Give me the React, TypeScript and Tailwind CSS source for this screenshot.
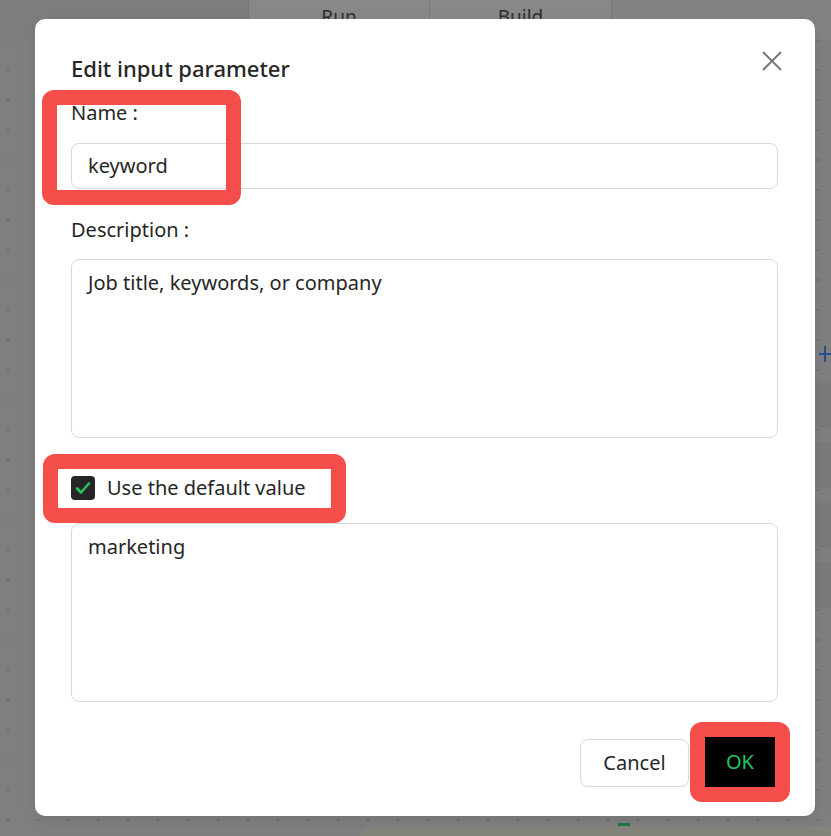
import React from "react";

const font = { fontFamily: '"Noto Sans", "Open Sans", sans-serif' };

function Annotation({ className }: { className: string }) {
  return <div className={`pointer-events-none absolute rounded-[12px] border-[15px] border-[#f44d4a] ${className}`} />;
}

function Field({ label, value, tall }: { label: string; value: string; tall?: boolean }) {
  return (
    <div className="flex flex-col">
      <div className="h-6 text-[20px] leading-6 text-[#262626]">{label}</div>
      <div
        className={`rounded-[8px] border border-[#d9d9d9] bg-white px-4 text-[20px] text-[#262626] ${
          tall ? "mt-[17px] h-[179px] pt-[8px]" : "mt-[18px] flex h-[46px] items-center"
        }`}
      >
        {value}
      </div>
    </div>
  );
}

export default function App() {
  return (
    <div className="relative h-[836px] w-[831px] overflow-hidden bg-[#7f7f7f]" style={font}>
      {/* canvas behind the mask */}
      <div className="absolute inset-0 bg-[radial-gradient(circle,#6c6c6c_1px,transparent_1.2px)] bg-[length:30px_30px] bg-[position:-7px_-5px]" />
      <div className="absolute left-0 top-0 flex h-[40px] w-full text-[19px] text-[#2e2e2e]">
        <div className="w-[248px] bg-[#7d7d7d]" />
        <div className="flex w-[182px] justify-center border-x border-[#777] bg-[#888] pt-[3px]">Run</div>
        <div className="flex w-[182px] justify-center border-r border-[#777] bg-[#888] pt-[3px]">Build</div>
        <div className="flex-1 bg-[#838383]" />
      </div>
      <svg width="14" height="18" viewBox="0 0 14 18" className="absolute left-[818px] top-[345px]">
        <path d="M7 1V17M1 9H13" stroke="#2a4f8f" strokeWidth="2" />
      </svg>
      <div className="absolute right-0 top-[382px] flex w-[16px] flex-col gap-[14px]">
        <div className="h-[46px] bg-[#7a7a7a]" />
        <div className="h-[46px] bg-[#7a7a7a]" />
        <div className="h-[46px] bg-[#7a7a7a]" />
        <div className="h-[46px] bg-[#7a7a7a]" />
      </div>
      <div className="absolute left-[360px] top-[826px] h-[20px] w-[480px] rounded-tl-[8px] bg-[#85847c]" />
      <div className="absolute left-[618px] top-[823px] h-[3px] w-[12px] bg-[#1f7a45]" />

      {/* modal */}
      <div className="absolute left-[35px] top-[19px] flex h-[797px] w-[780px] flex-col rounded-[10px] bg-white pl-[36px] pr-[37px] pt-[36px] shadow-[0_6px_16px_rgba(0,0,0,0.08)]">
        <div className="flex h-[26px] items-center justify-between">
          <div className="text-[22px] font-medium text-[#262626]">Edit input parameter</div>
          <svg width="22" height="22" viewBox="0 0 22 22" className="mr-[-5px] mt-[-14px]">
            <path d="M2 2L20 20M20 2L2 20" stroke="#7a7a7a" strokeWidth="2" />
          </svg>
        </div>

        <div className="mt-[20px]">
          <Field label="Name :" value="keyword" />
        </div>
        <div className="mt-[29px]">
          <Field label="Description :" value="Job title, keywords, or company" tall />
        </div>

        <div className="mt-[38px] flex h-6 items-center gap-3">
          <div className="flex h-[24px] w-[24px] items-center justify-center rounded-[4px] bg-[#262626]">
            <svg width="18" height="18" viewBox="0 0 18 18">
              <path d="M3 9.5L7 13.5L15 4.5" fill="none" stroke="#22c55e" strokeWidth="2.6" strokeLinecap="round" strokeLinejoin="round" />
            </svg>
          </div>
          <span className="text-[20px] text-[#262626]">Use the default value</span>
        </div>

        <div className="mt-[23px] h-[179px] rounded-[8px] border border-[#d9d9d9] px-4 pt-[8px] text-[20px] text-[#262626]">
          marketing
        </div>

        <div className="mt-[35px] flex items-end justify-end gap-4 pr-[3px]">
          <button className="h-[48px] w-[109px] rounded-[8px] border border-[#d9d9d9] bg-white text-[20px] text-[#262626] shadow-[0_2px_0_rgba(0,0,0,0.02)]">
            Cancel
          </button>
          <button className="h-[50px] w-[70px] bg-black text-[20px] text-[#22c55e]">OK</button>
        </div>
      </div>

      {/* red highlight annotations */}
      <Annotation className="left-[42px] top-[90px] h-[115px] w-[199px]" />
      <Annotation className="left-[43px] top-[454px] h-[69px] w-[303px]" />
      <Annotation className="left-[690px] top-[722px] h-[80px] w-[100px]" />
    </div>
  );
}
